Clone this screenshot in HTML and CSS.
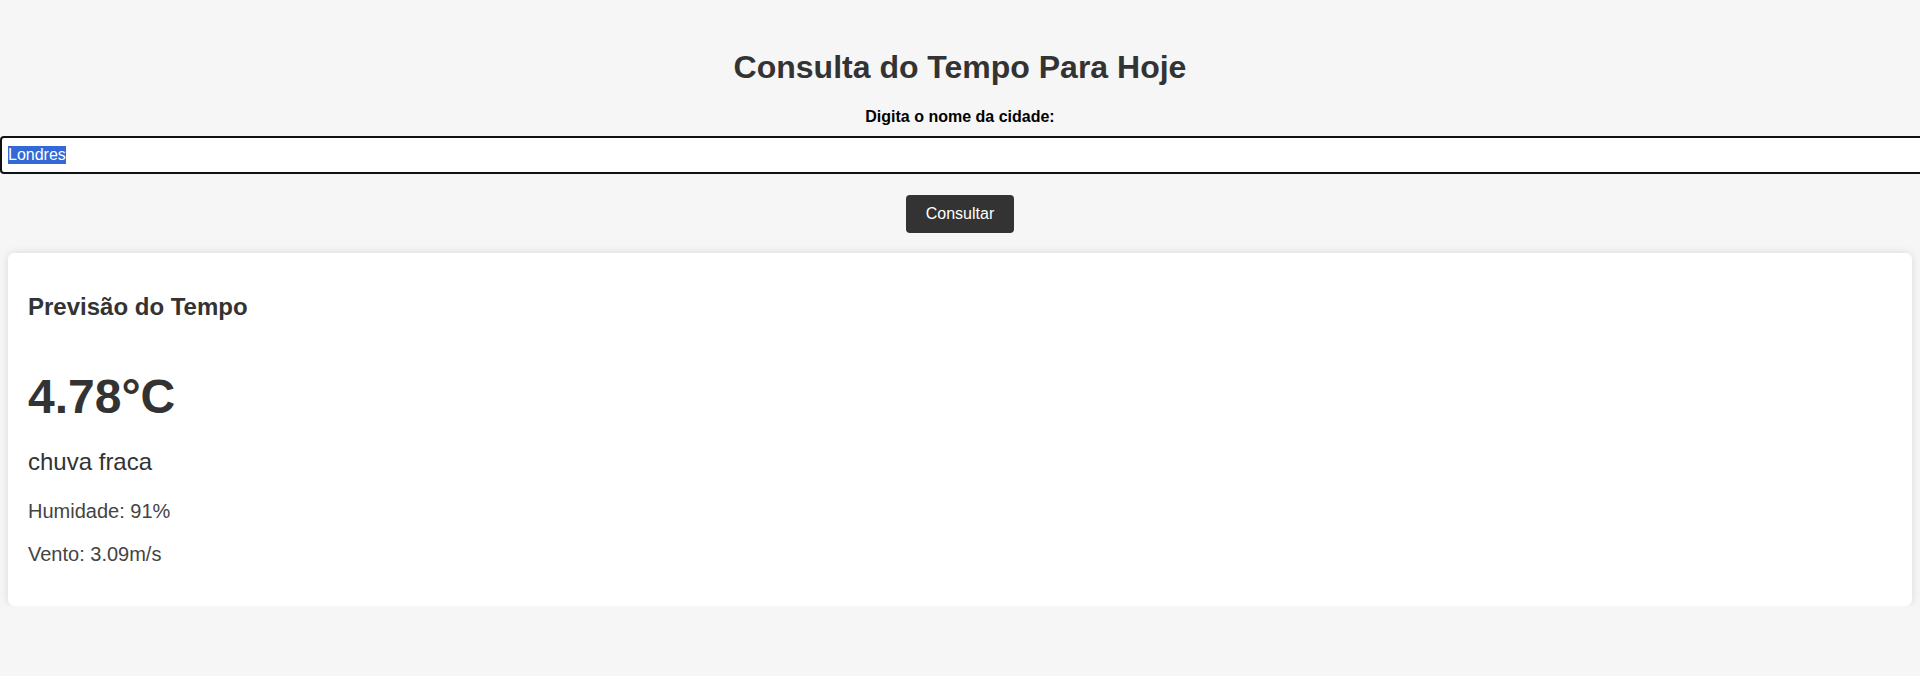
FILE: index.html
```html
<!DOCTYPE html>
<html lang="pt">
<head>
<meta charset="utf-8">
<title>Consulta do Tempo</title>
<link rel="stylesheet" href="styles.css">
</head>
<body>
<main class="page">
  <h1 class="title">Consulta do Tempo Para Hoje</h1>
  <form class="search" onsubmit="return false">
    <label class="search-label" for="city">Digita o nome da cidade:</label>
    <input class="search-input" id="city" type="text" value="Londres" autofocus>
    <button class="search-button" type="submit">Consultar</button>
  </form>
  <section class="card">
    <h2 class="card-title">Previsão do Tempo</h2>
    <p class="temp">4.78°C</p>
    <p class="desc">chuva fraca</p>
    <p class="detail">Humidade: 91%</p>
    <p class="detail">Vento: 3.09m/s</p>
  </section>
</main>
<script src="script.js"></script>
</body>
</html>
```

FILE: styles.css
```css
html {
  overflow-x: hidden;
}
body {
  margin: 0;
  background: #f6f6f6;
  color: #333;
  font-family: "Liberation Sans", Arial, sans-serif;
}
.page {
  padding-top: 28px;
}
.title {
  margin: 21.44px 0;
  font-size: 32px;
  font-weight: bold;
  text-align: center;
  color: #333;
}
.search {
  display: flex;
  flex-direction: column;
  align-items: center;
}
.search-label {
  display: block;
  font-size: 16px;
  font-weight: bold;
  color: #000;
  margin-bottom: 10px;
}
.search-input {
  align-self: stretch;
  width: calc(100% + 20px);
  box-sizing: border-box;
  margin: 0 -20px 0 0;
  padding: 8px 6px;
  border: 2px solid #111;
  border-radius: 4px;
  background: #fff;
  font-family: "Liberation Sans", Arial, sans-serif;
  font-size: 16px;
  line-height: 18px;
  color: #000;
  outline: none;
}
.search-input::selection {
  background: #3368d7;
  color: #fff;
}
.search-button {
  margin: 21px 0 20px;
  padding: 10px 20px;
  border: none;
  border-radius: 4px;
  background: #333;
  color: #fff;
  font-family: "Liberation Sans", Arial, sans-serif;
  font-size: 16px;
  line-height: 18px;
  cursor: pointer;
}
.card {
  margin: 0 8px;
  padding: 20px;
  background: #fff;
  border-radius: 6px;
  box-shadow: 0 0 10px rgba(0, 0, 0, 0.12);
}
.card-title {
  margin: 19.92px 0;
  font-size: 24px;
  font-weight: bold;
  color: #333;
}
.temp {
  margin: 48px 0 0;
  font-size: 48px;
  font-weight: bold;
  color: #333;
}
.desc {
  margin: 24px 0;
  font-size: 24px;
  color: #333;
}
.detail {
  margin: 20px 0;
  font-size: 20px;
  color: #444;
}
```

FILE: script.js
```js
var input = document.getElementById('city');
input.focus();
input.select();
```
